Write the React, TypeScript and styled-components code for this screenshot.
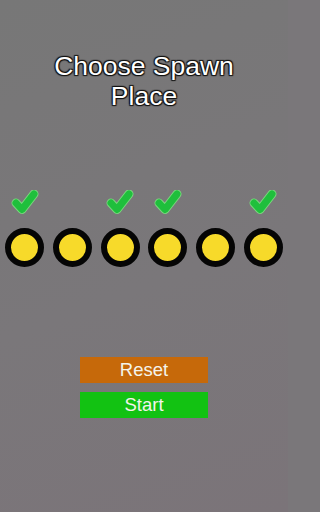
import styled, { createGlobalStyle } from 'styled-components';

const GlobalStyle = createGlobalStyle`
  html, body {
    margin: 0;
    padding: 0;
    background: #7a777a;
  }
  body {
    font-family: "Liberation Sans", Arial, sans-serif;
  }
`;

const Screen = styled.div`
  width: 288px;
  height: 512px;
  display: flex;
  flex-direction: column;
  align-items: center;
  background: linear-gradient(160deg, #777777 0%, #7a777a 55%, #7b7479 100%);
  overflow: hidden;
`;

const Title = styled.h1`
  margin: 51px 0 0;
  font-size: 26.5px;
  font-weight: normal;
  line-height: 30px;
  color: #ffffff;
  text-align: center;
  text-shadow:
    1px 1px 1px #111111,
    -1px -1px 1px #111111,
    1px -1px 1px #111111,
    -1px 1px 1px #111111;
`;

const Slots = styled.div`
  margin-top: 79px;
  width: 100%;
  padding: 0 5px;
  box-sizing: border-box;
  display: flex;
  justify-content: space-between;
`;

const Slot = styled.div`
  width: 39px;
  display: flex;
  flex-direction: column;
  align-items: center;
  gap: 12px;
`;

const CheckBox = styled.div`
  width: 28px;
  height: 26px;
  display: flex;
  align-items: center;
  justify-content: center;
`;

const Spot = styled.div`
  width: 27px;
  height: 27px;
  border-radius: 50%;
  background: #f7da2a;
  border: 6px solid #050505;
`;

const Buttons = styled.div`
  margin-top: 90px;
  display: flex;
  flex-direction: column;
  gap: 9px;
`;

const Button = styled.button<{ $color: string }>`
  width: 128px;
  height: 26px;
  border: none;
  padding: 0;
  background: ${p => p.$color};
  color: #f4f4ec;
  font-family: "Liberation Sans", Arial, sans-serif;
  font-size: 18.5px;
  line-height: 26px;
  cursor: pointer;
`;

function Check() {
  return (
    <svg width="28" height="26" viewBox="0 0 28 26">
      <path
        d="M5 13 L11 19.5 L23 4"
        fill="none"
        stroke="#7ad77e"
        strokeWidth="9"
        strokeLinecap="round"
        strokeLinejoin="round"
      />
      <path
        d="M5 13 L11 19.5 L23 4"
        fill="none"
        stroke="#1fbf3c"
        strokeWidth="7"
        strokeLinecap="round"
        strokeLinejoin="round"
      />
    </svg>
  );
}

const slots = [true, false, true, true, false, true];

export default function App() {
  return (
    <>
      <GlobalStyle />
      <Screen>
        <Title>
          Choose Spawn
          <br />
          Place
        </Title>
        <Slots>
          {slots.map((checked, i) => (
            <Slot key={i}>
              <CheckBox>{checked && <Check />}</CheckBox>
              <Spot />
            </Slot>
          ))}
        </Slots>
        <Buttons>
          <Button $color="#c6690a">Reset</Button>
          <Button $color="#12c212">Start</Button>
        </Buttons>
      </Screen>
    </>
  );
}
